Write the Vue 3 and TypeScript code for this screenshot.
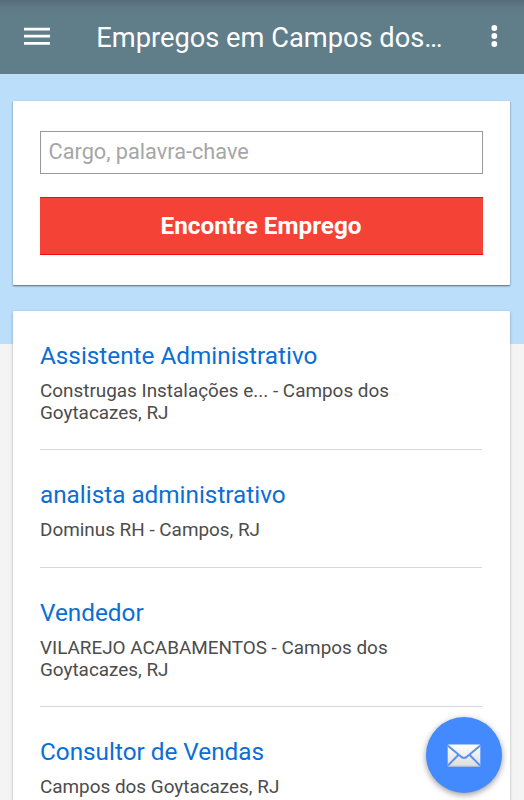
<script setup lang="ts">
interface Job {
  title: string
  meta: string[]
}

const jobs: Job[] = [
  { title: 'Assistente Administrativo', meta: ['Construgas Instalações e... - Campos dos', 'Goytacazes, RJ'] },
  { title: 'analista administrativo', meta: ['Dominus RH - Campos, RJ'] },
  { title: 'Vendedor', meta: ['VILAREJO ACABAMENTOS - Campos dos', 'Goytacazes, RJ'] },
  { title: 'Consultor de Vendas', meta: ['Campos dos Goytacazes, RJ'] },
]
</script>

<template>
  <div class="screen">
    <header class="bar">
      <svg class="menu" width="26" height="20" viewBox="0 0 26 20">
        <path d="M0 2.2h26M0 9.2h26M0 16.4h26" stroke="#fff" stroke-width="2.7" />
      </svg>
      <h1 class="heading">Empregos em Campos dos…</h1>
      <svg class="more" width="8" height="24" viewBox="0 0 8 24" fill="#fff">
        <circle cx="4.3" cy="4" r="2.9" />
        <circle cx="4.3" cy="12" r="2.9" />
        <circle cx="4.3" cy="20" r="2.9" />
      </svg>
    </header>
    <main class="content">
      <form class="card search" @submit.prevent>
        <input class="field" type="text" placeholder="Cargo, palavra-chave" />
        <button class="submit" type="submit">Encontre Emprego</button>
      </form>
      <section class="card list">
        <article v-for="job in jobs" :key="job.title" class="job">
          <h2 class="title">{{ job.title }}</h2>
          <p v-for="line in job.meta" :key="line" class="meta">{{ line }}</p>
        </article>
      </section>
    </main>
    <button class="fab" type="button" aria-label="E-mail">
      <svg width="34" height="23" viewBox="0 0 34 23">
        <defs>
          <linearGradient id="paper" x1="0" y1="0" x2="0" y2="1">
            <stop offset="0" stop-color="#fff" />
            <stop offset="1" stop-color="#dcdcdc" />
          </linearGradient>
        </defs>
        <rect x=".7" y=".5" width="32.6" height="22" rx="1.2" fill="url(#paper)" />
        <path d="M1 1.8 13.5 12.3Q17 15.6 20.5 12.3L33 1.8M1 21.5 11.3 11M33 21.5 22.7 11" fill="none" stroke="#5590f0" stroke-width="1.9" />
        <path d="M1.5 22.2h31" stroke="#b9bec6" stroke-width=".8" />
      </svg>
    </button>
  </div>
</template>

<style>
body {
  margin: 0;
  overflow: hidden;
}
</style>

<style scoped>
.screen {
  position: relative;
  box-sizing: border-box;
  height: 800px;
  overflow: hidden;
  background: linear-gradient(#bbdefb 344px, #f4f4f4 344px);
  font-family: Roboto, 'Liberation Sans', sans-serif;
}
.bar {
  display: flex;
  align-items: center;
  box-sizing: border-box;
  height: 74px;
  padding: 0 26px 0 24px;
  background: linear-gradient(#566b77, #607b87 8px, #607d8a 20px);
}
.menu {
  flex: none;
}
.heading {
  flex: 1;
  margin: 1px 0 0 46.3px;
  color: #fff;
  font-size: 27.25px;
  font-weight: 400;
  line-height: 34px;
  white-space: nowrap;
}
.more {
  flex: none;
  margin-top: -2px;
}
.content {
  display: flex;
  flex-direction: column;
  gap: 26px;
  padding: 27px 14px 0 12.6px;
}
.card {
  background: #fff;
  border-radius: 1px;
}
.search {
  display: flex;
  flex-direction: column;
  gap: 23px;
  box-sizing: border-box;
  height: 184px;
  padding: 30px 27.5px 0 27px;
  box-shadow: 0 1px 2px rgba(0, 0, 0, 0.55);
}
.field {
  box-sizing: border-box;
  width: 100%;
  height: 43px;
  padding: 0 8px 2px;
  border: 1px solid #9a9a9a;
  border-radius: 0;
  outline: 0;
  background: #fff;
  font: 400 21.7px Roboto, sans-serif;
}
.field::placeholder {
  color: #a6a6a6;
  opacity: 1;
}
.submit {
  height: 58px;
  padding: 0 0 2px;
  border: solid #f20d0d;
  border-width: 1px 0;
  border-radius: 0;
  background: #f44336;
  color: #fff;
  font: 700 24.3px Roboto, sans-serif;
}
.list {
  padding: 0 28px 0 27.4px;
  box-shadow: 0 1px 3px rgba(0, 0, 0, 0.3);
}
.job {
  padding: 30px 0 27px;
  border-bottom: 1px solid #d8d8d8;
}
.title {
  margin: 0 0 9px;
  color: #0a6ed6;
  font-size: 24.3px;
  font-weight: 400;
  line-height: 30px;
}
.meta {
  margin: 0;
  color: #4c4c4c;
  font-size: 18.9px;
  line-height: 21px;
  white-space: nowrap;
}
.meta + .meta {
  padding-top: 0.5px;
  margin-bottom: -0.5px;
}
.fab {
  position: absolute;
  right: 22px;
  bottom: 7px;
  display: flex;
  align-items: center;
  justify-content: center;
  width: 76px;
  height: 76px;
  padding: 0;
  border: 0;
  border-radius: 50%;
  background: #448aff;
  box-shadow: 0 2px 6px rgba(0, 0, 0, 0.4);
}
</style>
